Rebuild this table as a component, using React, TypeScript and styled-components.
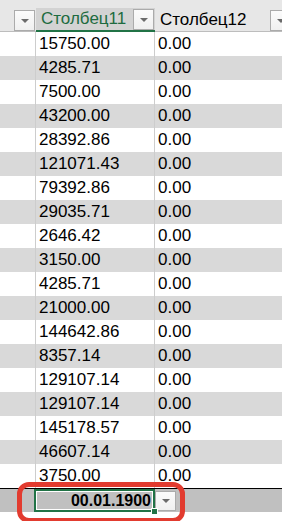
import React from "react";
import styled, { createGlobalStyle } from "styled-components";

const GlobalStyle = createGlobalStyle`
  html, body {
    margin: 0;
    padding: 0;
    background: #ffffff;
    overflow: hidden;
  }
  body {
    font-family: "Liberation Sans", Arial, sans-serif;
    font-size: 17px;
    color: #000;
  }
`;

const Sheet = styled.div`
  position: relative;
  width: 282px;
  height: 521px;
  overflow: hidden;
  background: #ffffff;
`;

const HeaderRow = styled.div`
  display: flex;
  align-items: flex-end;
  height: 32px;
  background: #e7e7e7;
`;

const HeaderCell = styled.div<{ $w: number; $selected?: boolean }>`
  box-sizing: border-box;
  flex: 0 0 ${(p) => p.$w}px;
  height: 24px;
  display: flex;
  align-items: flex-end;
  justify-content: space-between;
  padding-left: 5px;
  background: ${(p) => (p.$selected ? "#d3d3d3" : "#e7e7e7")};
  border-bottom: ${(p) => (p.$selected ? "2px solid #217346" : "1px solid #bdbdbd")};
  color: ${(p) => (p.$selected ? "#1d6b40" : "#000")};
`;

const HeaderText = styled.span`
  align-self: center;
  white-space: nowrap;
  line-height: 18px;
`;

const DropButton = styled.div<{ $h?: number }>`
  box-sizing: border-box;
  flex: 0 0 21px;
  height: ${(p) => p.$h ?? 21}px;
  margin-right: 1px;
  display: flex;
  align-items: center;
  justify-content: center;
  background: linear-gradient(#fbfbfb, #f0f0f0);
  border: 1px solid #ababab;
`;

const Arrow = styled.span`
  width: 0;
  height: 0;
  border-left: 4px solid transparent;
  border-right: 4px solid transparent;
  border-top: 4px solid #6b6b6b;
`;

const DataRow = styled.div<{ $band: boolean }>`
  display: flex;
  height: 24px;
  background: ${(p) => (p.$band ? "#d9d9d9" : "#ffffff")};
`;

const Cell = styled.div<{ $w: number }>`
  box-sizing: border-box;
  flex: 0 0 ${(p) => p.$w}px;
  display: flex;
  align-items: center;
  padding-left: 3px;
  border-right: 1px solid #cdcdcd;
  white-space: nowrap;
  line-height: 18px;
`;

const TotalRow = styled.div`
  display: flex;
  align-items: center;
  height: 24px;
  box-sizing: border-box;
  border-top: 1px solid #000;
  background: #c0c0c0;
`;

const Spacer = styled.div<{ $w: number }>`
  flex: 0 0 ${(p) => p.$w}px;
`;

const SelectedCell = styled.div`
  position: relative;
  box-sizing: border-box;
  flex: 0 0 121px;
  height: 23px;
  display: flex;
  align-items: center;
  justify-content: flex-end;
  padding-right: 2px;
  border: 2px solid #217346;
  box-shadow: inset 0 0 0 1px #ffffff;
  font-size: 16px;
  font-weight: bold;
  line-height: 18px;
`;

const FillHandle = styled.span`
  position: absolute;
  right: -5px;
  bottom: -5px;
  width: 5px;
  height: 5px;
  background: #217346;
  border: 1px solid #ffffff;
`;

const Highlight = styled.div`
  position: absolute;
  left: 17px;
  top: 482px;
  width: 168px;
  height: 41px;
  box-sizing: border-box;
  border: 5px solid #e23b2f;
  border-radius: 12px;
  pointer-events: none;
`;

const values = [
  "15750.00",
  "4285.71",
  "7500.00",
  "43200.00",
  "28392.86",
  "121071.43",
  "79392.86",
  "29035.71",
  "2646.42",
  "3150.00",
  "4285.71",
  "21000.00",
  "144642.86",
  "8357.14",
  "129107.14",
  "129107.14",
  "145178.57",
  "46607.14",
  "3750.00",
];

export default function App() {
  return (
    <Sheet>
      <GlobalStyle />
      <HeaderRow>
        <HeaderCell $w={36}>
          <span />
          <DropButton>
            <Arrow />
          </DropButton>
        </HeaderCell>
        <HeaderCell $w={119} $selected>
          <HeaderText>Столбец11</HeaderText>
          <DropButton>
            <Arrow />
          </DropButton>
        </HeaderCell>
        <HeaderCell $w={137}>
          <HeaderText>Столбец12</HeaderText>
          <DropButton>
            <Arrow />
          </DropButton>
        </HeaderCell>
      </HeaderRow>
      {values.map((v, i) => (
        <DataRow key={i} $band={i % 2 === 1}>
          <Cell $w={36} />
          <Cell $w={119}>{v}</Cell>
          <Cell $w={137}>0.00</Cell>
        </DataRow>
      ))}
      <TotalRow>
        <Spacer $w={34} />
        <SelectedCell>
          00.01.1900
          <FillHandle />
        </SelectedCell>
        <DropButton $h={20}>
          <Arrow />
        </DropButton>
      </TotalRow>
      <Highlight />
    </Sheet>
  );
}
